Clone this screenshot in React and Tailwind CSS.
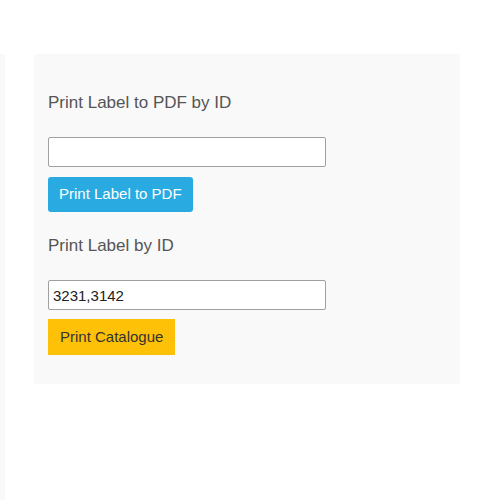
import React, { useState } from 'react';

const App = () => {
  const [pdfId, setPdfId] = useState('');
  const [labelId, setLabelId] = useState('3231,3142');

  return (
    <div className="w-[500px] h-[500px] bg-white flex pt-[54px] font-['Liberation_Sans',Arial,sans-serif]">
      {/* left edge of neighbouring column */}
      <div className="w-[5px] bg-[#f9f9f9]" />

      {/* Label printing panel */}
      <div className="ml-[29px] w-[426px] h-[330px] bg-[#f9f9f9] rounded-[3px] px-[14px] pt-[37px] flex flex-col items-start">
        <h2 className="text-[17px] leading-[24px] text-[#555]">Print Label to PDF by ID</h2>
        <input
          type="text"
          value={pdfId}
          onChange={(e) => setPdfId(e.target.value)}
          className="mt-[22px] w-[278px] h-[30px] bg-white border border-[#a0a0a0] rounded-[2px] px-[4px] text-[15px] text-[#222] outline-none"
        />
        <button className="mt-[10px] h-[35px] px-[11px] bg-[#29abe2] text-white text-[15px] rounded-[3px]">
          Print Label to PDF
        </button>

        <h2 className="mt-[22px] text-[17px] leading-[24px] text-[#555]">Print Label by ID</h2>
        <input
          type="text"
          value={labelId}
          onChange={(e) => setLabelId(e.target.value)}
          className="mt-[22px] w-[278px] h-[30px] bg-white border border-[#a0a0a0] rounded-[2px] px-[4px] text-[15px] text-[#222] outline-none"
        />
        <button className="mt-[9px] h-[36px] px-[12px] bg-[#ffc107] text-[#333] text-[15px]">
          Print Catalogue
        </button>
      </div>
    </div>
  );
};

export default App;
